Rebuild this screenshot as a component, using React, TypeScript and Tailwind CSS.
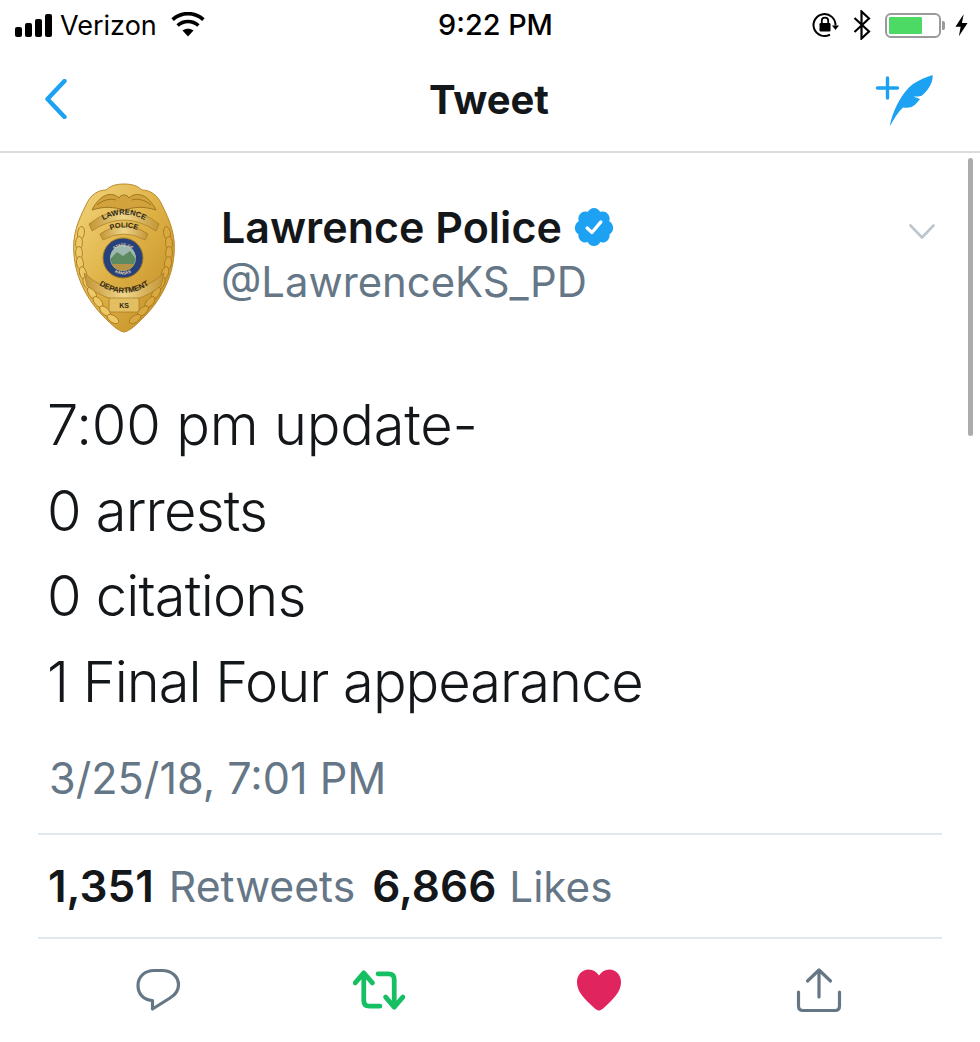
import React from "react";

const font = "font-['Inter',sans-serif]";

function SignalBars() {
  return (
    <svg width="38" height="24" viewBox="0 0 38 24" className="shrink-0">
      <rect x="0" y="14" width="7" height="10" rx="2" fill="#000" />
      <rect x="10" y="10" width="7" height="14" rx="2" fill="#000" />
      <rect x="20" y="6" width="7" height="18" rx="2" fill="#000" />
      <rect x="30" y="1" width="7" height="23" rx="2" fill="#000" />
    </svg>
  );
}

function Wifi() {
  return (
    <svg width="34" height="26" viewBox="0 0 34 26" className="shrink-0">
      <path d="M17 24.5 L11.5 18.6 C14.6 16 19.4 16 22.5 18.6 Z" fill="#000" />
      <path d="M6.6 13.5 C12.6 8.2 21.4 8.2 27.4 13.5" fill="none" stroke="#000" strokeWidth="3.6" />
      <path d="M1.6 7.6 C10.6 -0.4 23.4 -0.4 32.4 7.6" fill="none" stroke="#000" strokeWidth="3.6" />
    </svg>
  );
}

function RotationLock() {
  return (
    <svg width="28" height="28" viewBox="0 0 28 28" className="shrink-0">
      <path d="M24.5 14.5 A11 11 0 1 0 19 23.6" fill="none" stroke="#000" strokeWidth="2" />
      <path d="M21 14.5 H28 L24.5 19 Z" fill="#000" />
      <rect x="8.5" y="12" width="11" height="8.5" rx="1.2" fill="#000" />
      <path d="M10.8 12 V9.8 A3.2 3.2 0 0 1 17.2 9.8 V12" fill="none" stroke="#000" strokeWidth="1.8" />
    </svg>
  );
}

function Bluetooth() {
  return (
    <svg width="18" height="30" viewBox="0 0 18 30" className="shrink-0">
      <path d="M1.5 8 L16 21.5 L8.5 28.5 V1.5 L16 8.5 L1.5 22" fill="none" stroke="#000" strokeWidth="2.2" />
    </svg>
  );
}

function Battery() {
  return (
    <div className="flex items-center shrink-0">
      <div className="w-[56px] h-[25px] rounded-[6px] border-2 border-[#9a9a9a] p-[2px]">
        <div className="w-[33px] h-full bg-[#4cd964] rounded-[1px]" />
      </div>
      <div className="w-[3px] h-[9px] ml-[1px] rounded-r-[2px] bg-[#9a9a9a]" />
    </div>
  );
}

function Bolt() {
  return (
    <svg width="13" height="23" viewBox="0 0 15 26" className="shrink-0">
      <path d="M10 0 L0.5 14.5 H6.5 L4.5 25.5 L14.5 10 H8 Z" fill="#000" />
    </svg>
  );
}

function Compose() {
  return (
    <svg width="60" height="54" viewBox="0 0 60 54" className="shrink-0">
      <path d="M3.5 14 H23.5 M13.5 4 V24" stroke="#1da1f2" strokeWidth="3.4" strokeLinecap="round" fill="none" />
      <path
        d="M16 52 C18 38 28 18 39 10 C45 6 52 3 58.7 1 C59 6 57 11 54 15 C52 18 50 20 47.7 21.7 C45 22.5 42 22.5 39.5 22.7 C42 23.5 44 24 46 25 C43 29 40 32 37 33.3 C34 34 31 33.8 29 33.5 C24 38 20 45 16 52 Z"
        fill="#1da1f2"
      />
    </svg>
  );
}

// leaves along the wreath, left side; right side is mirrored
const leaves = [
  [9, 50, -8],
  [7, 60, -4],
  [7, 70, 2],
  [8, 80, 8],
  [11, 90, 16],
  [15, 100, 24],
  [20, 110, 32],
  [26, 119, 40],
  [33, 128, 48],
  [41, 136, 56],
];

function PoliceBadge() {
  const label = { fontFamily: "Liberation Sans, sans-serif", fontWeight: 700, fill: "#2f2a1b" };
  return (
    <svg width="104" height="150" viewBox="0 0 104 150" className="shrink-0">
      <defs>
        <linearGradient id="gold" x1="0" y1="0" x2="1" y2="1">
          <stop offset="0" stopColor="#f3d67e" />
          <stop offset="0.5" stopColor="#deb044" />
          <stop offset="1" stopColor="#bd8a24" />
        </linearGradient>
        <linearGradient id="band" x1="0" y1="0" x2="1" y2="0">
          <stop offset="0" stopColor="#c39536" />
          <stop offset="0.5" stopColor="#efd58a" />
          <stop offset="1" stopColor="#c39536" />
        </linearGradient>
        <path id="arcTop" d="M24 42 Q52 21 80 42" />
        <path id="arcMid" d="M32 50 Q52 39 72 50" />
        <path id="arcLow" d="M18 95 Q52 125 86 95" />
        <path id="arcSealTop" d="M36 75 A15.5 15.5 0 0 1 66 75" />
        <path id="arcSealLow" d="M34 78 A17.5 17.5 0 0 0 68 78" />
      </defs>
      {/* shield */}
      <path
        d="M52 1 C60 1 66 3 70 7 C78 7 86 12 90 22 C98 38 104 52 102 72 C100 96 88 118 72 134 C64 142 58 148 52 149 C46 148 40 142 32 134 C16 118 4 96 2 72 C0 52 6 38 14 22 C18 12 26 7 34 7 C38 3 44 1 52 1 Z"
        fill="url(#gold)"
        stroke="#b98a2c"
      />
      {/* wreath */}
      {leaves.map(([x, y, r]) => (
        <g key={`${x}-${y}`}>
          <ellipse cx={x} cy={y} rx="3.4" ry="6.5" fill="#edc968" stroke="#a5761c" strokeWidth="0.8" transform={`rotate(${-r} ${x} ${y})`} />
          <ellipse cx={104 - x} cy={y} rx="3.4" ry="6.5" fill="#d9a93f" stroke="#a5761c" strokeWidth="0.8" transform={`rotate(${r} ${104 - x} ${y})`} />
        </g>
      ))}
      {/* eagle */}
      <path d="M20 27 C28 11 40 8 47 15 C49 11 55 11 57 15 C64 8 76 11 84 27 C72 23 62 24 52 27 C42 24 32 23 20 27 Z" fill="#d2a23c" stroke="#9e761f" />
      <path d="M25 22 C31 17 38 15 44 17 M79 22 C73 17 66 15 60 17" fill="none" stroke="#9e761f" />
      {/* scrolls */}
      <path d="M17 41 Q52 14 87 41 L84 48 Q52 26 20 48 Z" fill="url(#band)" stroke="#a37a22" strokeWidth="0.7" />
      <path d="M28 51 Q52 35 76 51 L73 57 Q52 45 31 57 Z" fill="url(#band)" stroke="#a37a22" strokeWidth="0.7" />
      <path d="M12 90 Q52 126 92 90 L89 103 Q52 132 15 103 Z" fill="url(#band)" stroke="#a37a22" strokeWidth="0.7" />
      <rect x="37" y="115" width="30" height="14" rx="2" fill="#e3bf62" stroke="#a37a22" strokeWidth="0.7" />
      <text {...label} fontSize="7.6" textAnchor="middle">
        <textPath href="#arcTop" startOffset="50%">LAWRENCE</textPath>
      </text>
      <text {...label} fontSize="7.4" textAnchor="middle">
        <textPath href="#arcMid" startOffset="50%">POLICE</textPath>
      </text>
      <text {...label} fontSize="7.8" textAnchor="middle">
        <textPath href="#arcLow" startOffset="50%">DEPARTMENT</textPath>
      </text>
      <text {...label} x="52" y="125" fontSize="7" textAnchor="middle">KS</text>
      {/* seal */}
      <circle cx="51" cy="75" r="20" fill="#27417c" stroke="#a37a22" />
      <circle cx="51" cy="75" r="13" fill="#9db8ae" />
      <path d="M38.2 76 L45 69 L51 73 L58 68 L63.8 76 A13 13 0 0 1 38.2 76 Z" fill="#5e8a62" />
      <path d="M39.5 81 H62.5 A13 13 0 0 1 39.5 81 Z" fill="#b59346" />
      <text fontFamily="Liberation Sans, sans-serif" fontWeight="700" fontSize="4" fill="#e9dfb8" textAnchor="middle">
        <textPath href="#arcSealTop" startOffset="50%">STATE OF</textPath>
      </text>
      <text fontFamily="Liberation Sans, sans-serif" fontWeight="700" fontSize="4" fill="#e9dfb8" textAnchor="middle">
        <textPath href="#arcSealLow" startOffset="50%">KANSAS</textPath>
      </text>
    </svg>
  );
}

function VerifiedBadge() {
  return (
    <svg width="40" height="40" viewBox="1 1 22 22" className="shrink-0">
      <path
        fill="#1da1f2"
        d="M22.5 12.5c0-1.58-.875-2.95-2.148-3.6.154-.435.238-.905.238-1.4 0-2.21-1.71-3.998-3.818-3.998-.47 0-.92.084-1.336.25C14.818 2.415 13.51 1.5 12 1.5s-2.816.917-3.437 2.25c-.415-.165-.866-.25-1.336-.25-2.11 0-3.818 1.79-3.818 4 0 .494.083.964.237 1.4-1.272.65-2.147 2.018-2.147 3.6 0 1.495.782 2.798 1.942 3.486-.02.17-.032.34-.032.514 0 2.21 1.708 4 3.818 4 .47 0 .92-.086 1.335-.25.62 1.334 1.926 2.25 3.437 2.25 1.512 0 2.818-.916 3.437-2.25.415.163.865.248 1.336.248 2.11 0 3.818-1.79 3.818-4 0-.174-.012-.344-.033-.513 1.158-.687 1.943-1.99 1.943-3.484z"
      />
      <path d="M8.2 12.6 L10.9 15 L15.8 9.2" fill="none" stroke="#fff" strokeWidth="1.8" strokeLinecap="round" strokeLinejoin="round" />
    </svg>
  );
}

function ReplyIcon() {
  return (
    <svg width="46" height="46" viewBox="0 0 46 46" className="shrink-0">
      <path
        d="M18 3.5 H26 C35.5 3.5 42.5 9.5 42.5 18 C42.5 24 39 28 34 31 L16.5 42 V33.5 C8 33.5 2 27 2 18.5 C2 9.5 9 3.5 18 3.5 Z"
        fill="none"
        stroke="#657786"
        strokeWidth="3.2"
        strokeLinejoin="round"
      />
    </svg>
  );
}

function RetweetIcon() {
  return (
    <svg width="52" height="40" viewBox="0 0 54 42" className="shrink-0">
      <path
        d="M2 13.5 L11 3 L20 13.5 M11 4 V32 C11 36 13 38 17 38 H28 M26 4 H37 C41 4 43 6 43 10 V38 M34 28.5 L43 39 L52 28.5"
        fill="none"
        stroke="#17bf63"
        strokeWidth="5"
        strokeLinecap="round"
        strokeLinejoin="round"
      />
    </svg>
  );
}

function HeartIcon() {
  return (
    <svg width="46" height="42" viewBox="0 0 46 42" className="shrink-0">
      <path
        d="M23 41.5 C21 41.5 18 39 13 34 C6 27.5 1 21 1 13 C1 5.5 6.5 0.5 12.5 0.5 C17 0.5 20.5 2.5 23 6.5 C25.5 2.5 29 0.5 33.5 0.5 C39.5 0.5 45 5.5 45 13 C45 21 40 27.5 33 34 C28 39 25 41.5 23 41.5 Z"
        fill="#e0245e"
      />
    </svg>
  );
}

function ShareIcon() {
  return (
    <svg width="46" height="46" viewBox="0 0 46 46" className="shrink-0">
      <path
        d="M23 30 V3 M11.5 14 L23 3 L34.5 14 M2.5 25 V39 C2.5 42 4 43.5 7 43.5 H39 C42 43.5 43.5 42 43.5 39 V25"
        fill="none"
        stroke="#657786"
        strokeWidth="3.2"
        strokeLinecap="round"
        strokeLinejoin="round"
      />
    </svg>
  );
}

export default function App() {
  return (
    <div className={`relative w-[980px] h-[1042px] overflow-hidden bg-white ${font}`}>
      {/* Status bar */}
      <div className="h-[50px] pl-[15px] pr-[12px] grid grid-cols-3 items-center text-black">
        <div className="flex items-center">
          <SignalBars />
          <span className="ml-[7px] text-[27px] leading-none font-normal">Verizon</span>
          <div className="ml-[14px]"><Wifi /></div>
        </div>
        <div className="text-center text-[28.8px] leading-none font-medium ml-[8px]">9:22 PM</div>
        <div className="flex items-center justify-end">
          <RotationLock />
          <div className="ml-[14px]"><Bluetooth /></div>
          <div className="ml-[14px]"><Battery /></div>
          <div className="ml-[10px]"><Bolt /></div>
        </div>
      </div>

      {/* Nav bar */}
      <div className="h-[103px] border-b-2 border-[#d8dcdf] pl-[45px] pr-[46px] flex items-center justify-between">
        <svg width="22" height="40" viewBox="0 0 22 40" className="shrink-0 mb-[4px]">
          <path d="M19.5 2 L2.5 20 L19.5 38" fill="none" stroke="#1da1f2" strokeWidth="4.4" strokeLinecap="round" strokeLinejoin="round" />
        </svg>
        <div className="text-[40px] leading-none font-bold text-[#14171a] ml-[37px] mb-[2px]">Tweet</div>
        <Compose />
      </div>

      {/* Tweet body */}
      <div className="relative px-[38px]">
        <div className="flex pt-[30px] pl-[34px] pr-[7px]">
          <PoliceBadge />
          <div className="ml-[45px] mt-[18px]">
            <div className="flex items-center gap-[12px]">
              <span className="text-[43px] leading-[52px] font-semibold text-[#14171a]">Lawrence Police</span>
              <VerifiedBadge />
            </div>
            <div className="text-[41.8px] leading-[58px] font-normal text-[#657786]">@LawrenceKS_PD</div>
          </div>
          <svg width="26" height="15" viewBox="0 0 26 15" className="ml-auto mt-[41px] shrink-0">
            <path d="M1.5 1.5 L13 13.5 L24.5 1.5" fill="none" stroke="#bcc6cd" strokeWidth="2.6" strokeLinecap="round" strokeLinejoin="round" />
          </svg>
        </div>

        <div className="mt-[50px] pl-[9px] text-[56px] leading-[85.5px] font-light text-[#14171a]">
          <div className="tracking-[-0.2px]">7:00 pm update-</div>
          <div className="tracking-[-0.8px]">0 arrests</div>
          <div className="tracking-[-0.8px]">0 citations</div>
          <div className="tracking-[-1px]">1 Final Four appearance</div>
        </div>

        <div className="mt-[23px] pl-[11px] text-[43.2px] leading-[60px] font-normal text-[#657786]">3/25/18, 7:01 PM</div>

        <div className="mt-[25px] border-t-2 border-[#e1e8ed] h-[104px] pl-[10px] flex items-center gap-[17px]">
          <div>
            <span className="text-[44px] font-semibold text-[#14171a]">1,351</span>
            <span className="ml-[15px] text-[42.7px] text-[#657786]">Retweets</span>
          </div>
          <div>
            <span className="text-[44px] font-semibold text-[#14171a]">6,866</span>
            <span className="ml-[13px] text-[42.2px] text-[#657786]">Likes</span>
          </div>
        </div>

        {/* Actions */}
        <div className="border-t-2 border-[#e1e8ed] pt-[28px] relative h-[90px]">
          <div className="flex items-center pl-[98px]">
            <ReplyIcon />
            <div className="ml-[171px]"><RetweetIcon /></div>
            <div className="ml-[171px]"><HeartIcon /></div>
            <div className="ml-[174px]"><ShareIcon /></div>
          </div>
        </div>
      </div>

      {/* Scrollbar overlay */}
      <div className="absolute left-[968px] top-[158px] w-[5px] h-[278px] rounded-full bg-[#acacac]" />
    </div>
  );
}
